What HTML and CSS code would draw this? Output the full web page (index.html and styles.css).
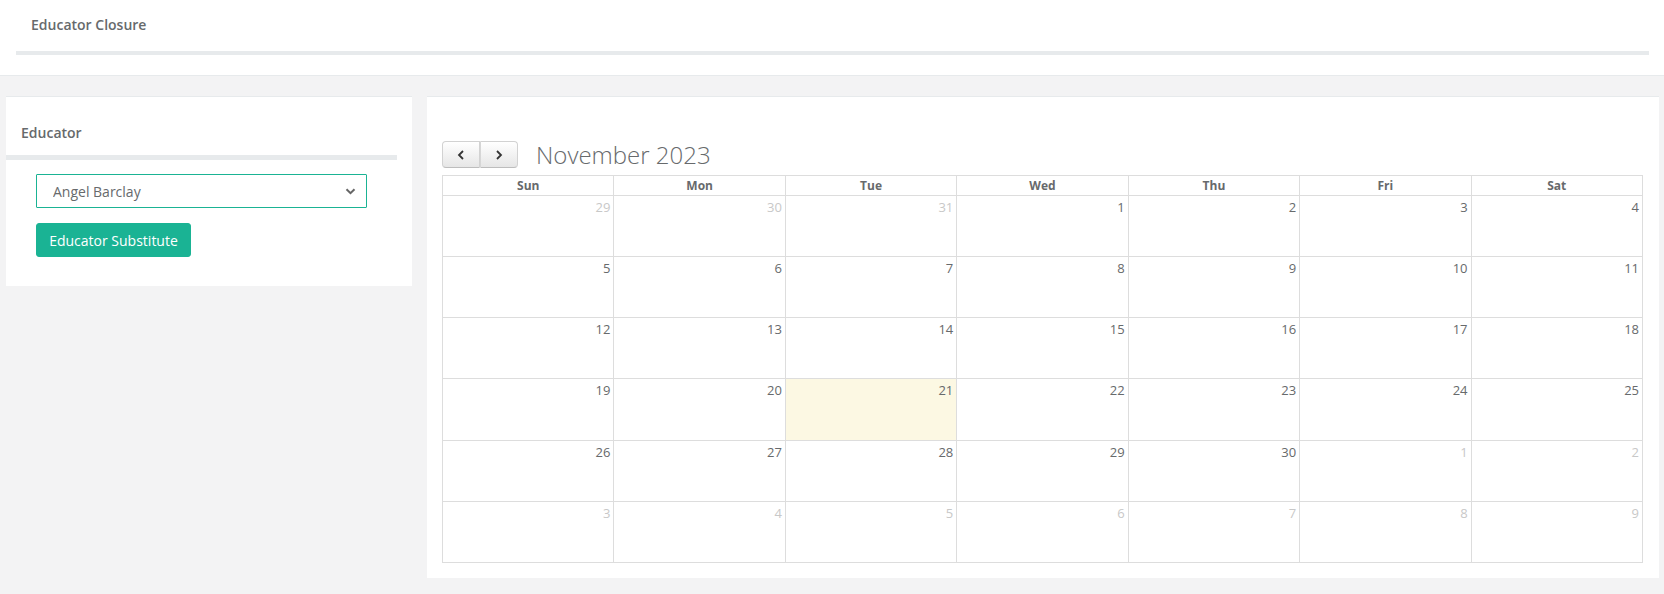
FILE: index.html
```html
<!DOCTYPE html>
<html lang="en">
<head>
<meta charset="utf-8">
<title>Educator Closure</title>
<link rel="stylesheet" href="styles.css">
</head>
<body>
<header class="topbar">
  <div class="topbar-inner">
    <h5 class="page-title">Educator Closure</h5>
  </div>
</header>
<main class="content">
  <section class="panel panel-side">
    <div class="panel-head"><h5 class="panel-title">Educator</h5></div>
    <div class="panel-body">
      <div class="select-wrap">
        <select class="field">
          <option>Angel Barclay</option>
        </select>
        <svg class="select-caret" width="11" height="7" viewBox="0 0 11 7"><path d="M1.5 1.2 L5.5 5.2 L9.5 1.2" fill="none" stroke="#666" stroke-width="2"/></svg>
      </div>
      <button class="btn-primary" type="button">Educator Substitute</button>
    </div>
  </section>
  <section class="panel panel-cal">
    <div class="cal-toolbar">
      <div class="btn-group">
        <button class="nav-btn" type="button" aria-label="prev"><svg width="10" height="12" viewBox="0 0 10 12"><path d="M7 2 L3 6 L7 10" fill="none" stroke="#333" stroke-width="1.8"/></svg></button>
        <button class="nav-btn" type="button" aria-label="next"><svg width="10" height="12" viewBox="0 0 10 12"><path d="M3 2 L7 6 L3 10" fill="none" stroke="#333" stroke-width="1.8"/></svg></button>
      </div>
      <h2 class="cal-title">November 2023</h2>
    </div>
    <div class="cal-grid">
      <div class="dow">Sun</div><div class="dow">Mon</div><div class="dow">Tue</div><div class="dow">Wed</div><div class="dow">Thu</div><div class="dow">Fri</div><div class="dow">Sat</div>
      <div class="day other">29</div><div class="day other">30</div><div class="day other">31</div><div class="day">1</div><div class="day">2</div><div class="day">3</div><div class="day">4</div>
      <div class="day">5</div><div class="day">6</div><div class="day">7</div><div class="day">8</div><div class="day">9</div><div class="day">10</div><div class="day">11</div>
      <div class="day">12</div><div class="day">13</div><div class="day">14</div><div class="day">15</div><div class="day">16</div><div class="day">17</div><div class="day">18</div>
      <div class="day">19</div><div class="day">20</div><div class="day today">21</div><div class="day">22</div><div class="day">23</div><div class="day">24</div><div class="day">25</div>
      <div class="day">26</div><div class="day">27</div><div class="day">28</div><div class="day">29</div><div class="day">30</div><div class="day other">1</div><div class="day other">2</div>
      <div class="day other">3</div><div class="day other">4</div><div class="day other">5</div><div class="day other">6</div><div class="day other">7</div><div class="day other">8</div><div class="day other">9</div>
    </div>
  </section>
</main>
</body>
</html>
```

FILE: styles.css
```css
* { box-sizing: border-box; }
html, body { margin: 0; padding: 0; }
body {
  background: #f3f3f4;
  font-family: "Open Sans", "Liberation Sans", sans-serif;
  font-size: 13px;
  color: #676a6c;
  width: 1664px;
  height: 594px;
  overflow: hidden;
}
.topbar {
  background: #fff;
  border-bottom: 1px solid #e7eaec;
  height: 76px;
  padding: 0 15px 0 16px;
}
.topbar-inner {
  border-bottom: 4px solid #e7eaec;
  padding: 15px 15px 0;
  height: 55px;
}
.page-title {
  margin: 0;
  font-size: 14px;
  font-weight: 600;
  line-height: 20px;
  color: #676a6c;
}
.content {
  display: grid;
  grid-template-columns: 406px 1232px;
  column-gap: 15px;
  align-items: start;
  padding: 20px 5px 0 6px;
}
.panel {
  background: #fff;
  border-top: 1px solid #e7eaec;
}
.panel-head {
  margin-right: 15px;
  padding: 26px 15px 12px;
  border-bottom: 5px solid #e7eaec;
}
.panel-title {
  margin: 0;
  font-size: 14px;
  font-weight: 600;
  line-height: 20px;
  color: #676a6c;
}
.panel-body {
  padding: 14px 30px 29px;
  display: flex;
  flex-direction: column;
  align-items: flex-start;
  gap: 15px;
}
.select-wrap {
  position: relative;
  width: 331px;
  height: 34px;
}
.field {
  -webkit-appearance: none;
  appearance: none;
  width: 100%;
  height: 34px;
  border: 1px solid #1ab394;
  border-radius: 1px;
  background: #fff;
  padding: 0 30px 0 16px;
  font-family: "Open Sans", "Liberation Sans", sans-serif;
  font-size: 14px;
  color: #676a6c;
  outline: none;
}
.select-caret {
  position: absolute;
  right: 11px;
  top: 14px;
  pointer-events: none;
}
.btn-primary {
  height: 34px;
  width: 155px;
  padding: 0;
  background: #1ab394;
  border: 1px solid #1ab394;
  border-radius: 3px;
  color: #fff;
  font-family: "Open Sans", "Liberation Sans", sans-serif;
  font-size: 14px;
  font-weight: 500;
}
.panel-cal {
  padding: 44px 16px 15px 15px;
}
.cal-toolbar {
  display: flex;
  align-items: center;
  height: 27px;
  margin-bottom: 7px;
}
.btn-group {
  display: flex;
}
.nav-btn {
  width: 38px;
  height: 27px;
  padding: 0;
  display: flex;
  align-items: center;
  justify-content: center;
  background: linear-gradient(#ffffff, #e6e6e6);
  border: 1px solid #d2d2d2;
  border-bottom-color: #bdbdbd;
  box-shadow: inset 0 1px 0 rgba(255,255,255,.3);
}
.nav-btn:first-child {
  border-radius: 4px 0 0 4px;
}
.nav-btn + .nav-btn {
  border-left: 1px solid #d6d6d6;
  border-radius: 0 4px 4px 0;
}
.cal-title {
  margin: 0 0 0 18px;
  font-size: 24px;
  font-weight: 300;
  line-height: 27px;
  color: #676a6c;
}
.cal-grid {
  display: grid;
  grid-template-columns: repeat(7, 1fr);
  grid-template-rows: 20px repeat(6, 61.17px);
  border-top: 1px solid #ddd;
  border-left: 1px solid #ddd;
  width: 1201px;
}
.dow, .day {
  border-right: 1px solid #ddd;
  border-bottom: 1px solid #ddd;
}
.dow {
  text-align: center;
  font-size: 12px;
  font-weight: 700;
  line-height: 19px;
  color: #676a6c;
}
.day {
  text-align: right;
  padding: 2px 3px 0 0;
  font-size: 13px;
  line-height: 18px;
  color: #676a6c;
}
.day.other { color: #c8c8c8; }
.day.today { background: #fcf8e3; }
```
